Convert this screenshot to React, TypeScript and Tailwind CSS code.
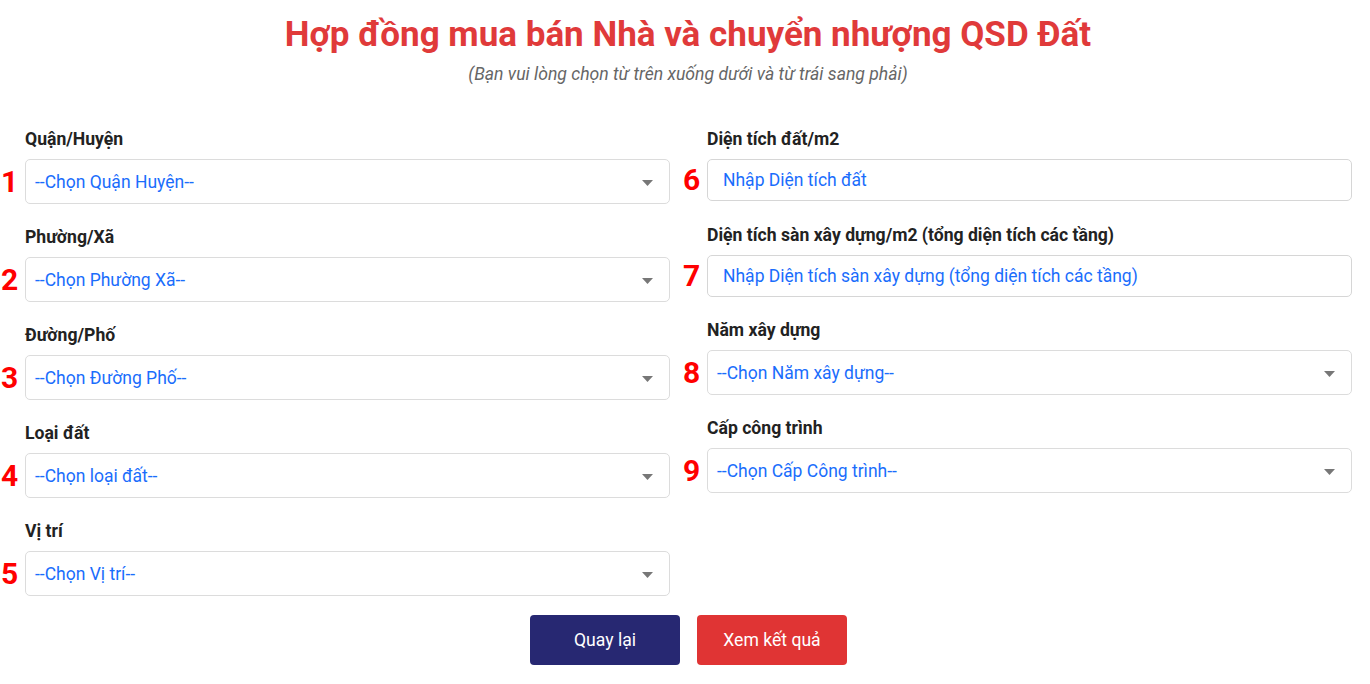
import React from "react";

const font = { fontFamily: "Roboto, 'Noto Sans', sans-serif" };

function Caret() {
  return (
    <svg width="11" height="6" viewBox="0 0 11 6" className="shrink-0">
      <path d="M0 0 H11 L5.5 6 Z" fill="#777" />
    </svg>
  );
}

function SelectField({ n, label, text }: { n: string; label: string; text: string }) {
  return (
    <div className="flex flex-col">
      <div className="pl-[25px] h-[24px] leading-[24px] text-[17.6px] font-bold text-[#222] mb-[8px]">{label}</div>
      <div className="flex items-center">
        <div className="w-[25px] text-[30px] font-bold text-[#ff0000] leading-none pl-[1px]">{n}</div>
        <div className="w-[645px] h-[45px] border border-[#dcdcdc] rounded-[5px] bg-white flex items-center pl-[9px] pr-[16px] pt-[2px]">
          <span className="flex-1 text-[17.5px] text-[#1a6dfc]">{text}</span>
          <Caret />
        </div>
      </div>
    </div>
  );
}

function InputField({ n, label, text }: { n: string; label: string; text: string }) {
  return (
    <div className="flex flex-col">
      <div className="pl-[25px] h-[24px] leading-[24px] text-[17.6px] font-bold text-[#222] mb-[8px]">{label}</div>
      <div className="flex items-center">
        <div className="w-[25px] text-[30px] font-bold text-[#ff0000] leading-none pl-[1px]">{n}</div>
        <div className="w-[645px] h-[42px] border border-[#d6d6d6] rounded-[5px] bg-white flex items-center pl-[15px]">
          <span className="text-[17.5px] text-[#1a6dfc]">{text}</span>
        </div>
      </div>
    </div>
  );
}

export default function App() {
  return (
    <div className="w-[1370px] h-[684px] bg-white overflow-hidden" style={font}>
      <div className="pl-[6px] pt-[13px] text-center">
        <h1 className="text-[35px] font-bold text-[#e03a3a] leading-[44px]">
          Hợp đồng mua bán Nhà và chuyển nhượng QSD Đất
        </h1>
        <p className="text-[17.6px] italic text-[#666] leading-[24px] mt-[5px]">
          (Bạn vui lòng chọn từ trên xuống dưới và từ trái sang phải)
        </p>
      </div>
      <div className="flex gap-[12px] mt-[41px]">
        <div className="flex flex-col gap-[21px] w-[670px]">
          <SelectField n="1" label="Quận/Huyện" text="--Chọn Quận Huyện--" />
          <SelectField n="2" label="Phường/Xã" text="--Chọn Phường Xã--" />
          <SelectField n="3" label="Đường/Phố" text="--Chọn Đường Phố--" />
          <SelectField n="4" label="Loại đất" text="--Chọn loại đất--" />
          <SelectField n="5" label="Vị trí" text="--Chọn Vị trí--" />
        </div>
        <div className="flex flex-col gap-[21px] w-[670px]">
          <InputField n="6" label="Diện tích đất/m2" text="Nhập Diện tích đất" />
          <div className="mt-[1px]">
            <InputField
              n="7"
              label="Diện tích sàn xây dựng/m2 (tổng diện tích các tầng)"
              text="Nhập Diện tích sàn xây dựng (tổng diện tích các tầng)"
            />
          </div>
          <SelectField n="8" label="Năm xây dựng" text="--Chọn Năm xây dựng--" />
          <SelectField n="9" label="Cấp công trình" text="--Chọn Cấp Công trình--" />
        </div>
      </div>
      <div className="flex justify-center gap-[17px] mt-[19px] pl-[7px]">
        <button className="w-[150px] h-[50px] rounded-[4px] bg-[#272872] text-white text-[17.6px]">Quay lại</button>
        <button className="w-[150px] h-[50px] rounded-[4px] bg-[#e03434] text-white text-[17.6px]">Xem kết quả</button>
      </div>
    </div>
  );
}
